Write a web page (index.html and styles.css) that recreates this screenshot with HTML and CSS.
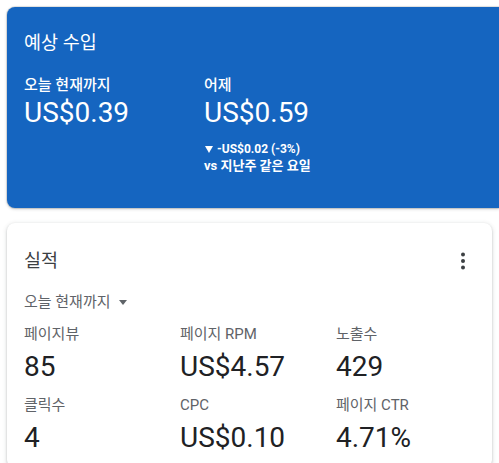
FILE: index.html
```html
<!DOCTYPE html>
<html lang="ko">
<head>
<meta charset="utf-8">
<title>AdSense</title>
<link rel="stylesheet" href="styles.css">
</head>
<body>
<div class="page">
  <section class="earnings">
    <h2 class="earnings-title">예상 수입</h2>
    <div class="earnings-row">
      <div class="earn-col">
        <div class="earn-label">오늘 현재까지</div>
        <div class="earn-value">US$0.39</div>
      </div>
      <div class="earn-col">
        <div class="earn-label">어제</div>
        <div class="earn-value">US$0.59</div>
        <div class="earn-change"><span class="tri-down"></span>-US$0.02 (-3%)</div>
        <div class="earn-compare">vs 지난주 같은 요일</div>
      </div>
    </div>
  </section>

  <section class="perf">
    <div class="perf-head">
      <h2 class="perf-title">실적</h2>
      <svg class="more" viewBox="0 0 24 24" width="24" height="24"><circle cx="12" cy="5.5" r="2"/><circle cx="12" cy="12" r="2"/><circle cx="12" cy="18.5" r="2"/></svg>
    </div>
    <div class="range">오늘 현재까지<span class="caret"></span></div>
    <div class="metrics">
      <div class="metric"><div class="m-label">페이지뷰</div><div class="m-value">85</div></div>
      <div class="metric"><div class="m-label">페이지 RPM</div><div class="m-value">US$4.57</div></div>
      <div class="metric"><div class="m-label">노출수</div><div class="m-value">429</div></div>
      <div class="metric"><div class="m-label">클릭수</div><div class="m-value">4</div></div>
      <div class="metric"><div class="m-label">CPC</div><div class="m-value">US$0.10</div></div>
      <div class="metric"><div class="m-label">페이지 CTR</div><div class="m-value">4.71%</div></div>
    </div>
  </section>
</div>
</body>
</html>
```
FILE: styles.css
```css
html, body {
  margin: 0;
  padding: 0;
  background: #ffffff;
  overflow: hidden;
}
body {
  font-family: Roboto, "Noto Sans CJK KR", sans-serif;
}
.page {
  padding: 7px 0 0 7px;
  display: flex;
  flex-direction: column;
  gap: 15px;
}
.earnings {
  background: #1565c0;
  color: #ffffff;
  border-radius: 8px 0 0 8px;
  padding: 24px 17px 34px 17px;
  box-shadow: 0 0 0 1px rgba(60, 64, 67, 0.12), 0 1px 3px rgba(60, 64, 67, 0.3);
}
.earnings-title {
  margin: 0;
  font-size: 18.5px;
  font-weight: 400;
  line-height: 24px;
}
.earnings-row {
  display: flex;
  margin-top: 20px;
}
.earn-col {
  width: 180px;
}
.earn-label {
  font-size: 15px;
  font-weight: 500;
  line-height: 20px;
}
.earn-value {
  font-size: 28px;
  font-weight: 400;
  line-height: 36px;
}
.earn-change {
  margin-top: 10px;
  font-size: 12px;
  font-weight: 700;
  line-height: 16px;
  display: flex;
  align-items: center;
}
.tri-down {
  display: inline-block;
  width: 0;
  height: 0;
  border-left: 4px solid transparent;
  border-right: 4px solid transparent;
  border-top: 7px solid #ffffff;
  margin: 0 4px 0 1px;
}
.earn-compare {
  font-size: 13px;
  font-weight: 700;
  line-height: 17px;
}
.perf {
  background: #ffffff;
  margin-right: 7px;
  border-radius: 8px;
  padding: 26px 17px 12px 17px;
  box-shadow: 0 1px 2px rgba(60, 64, 67, 0.25), 0 1px 4px 1px rgba(60, 64, 67, 0.12);
}
.perf-head {
  display: flex;
  justify-content: space-between;
  align-items: center;
  height: 24px;
}
.perf-title {
  margin: 0;
  font-size: 18.5px;
  font-weight: 400;
  line-height: 24px;
  color: #3c4043;
}
.more {
  fill: #3c4043;
  margin-right: 0;
}
.range {
  margin-top: 19px;
  font-size: 15px;
  line-height: 20px;
  color: #5f6368;
  display: flex;
  align-items: center;
}
.caret {
  display: inline-block;
  width: 0;
  height: 0;
  border-left: 4px solid transparent;
  border-right: 4px solid transparent;
  border-top: 5px solid #5f6368;
  margin-left: 8px;
}
.metrics {
  margin-top: 12px;
  display: grid;
  grid-template-columns: 156px 156px 1fr;
  row-gap: 10px;
}
.m-label {
  font-size: 15px;
  line-height: 20px;
  color: #5f6368;
}
.m-value {
  margin-top: 5px;
  font-size: 28px;
  line-height: 36px;
  color: #202124;
}
```
